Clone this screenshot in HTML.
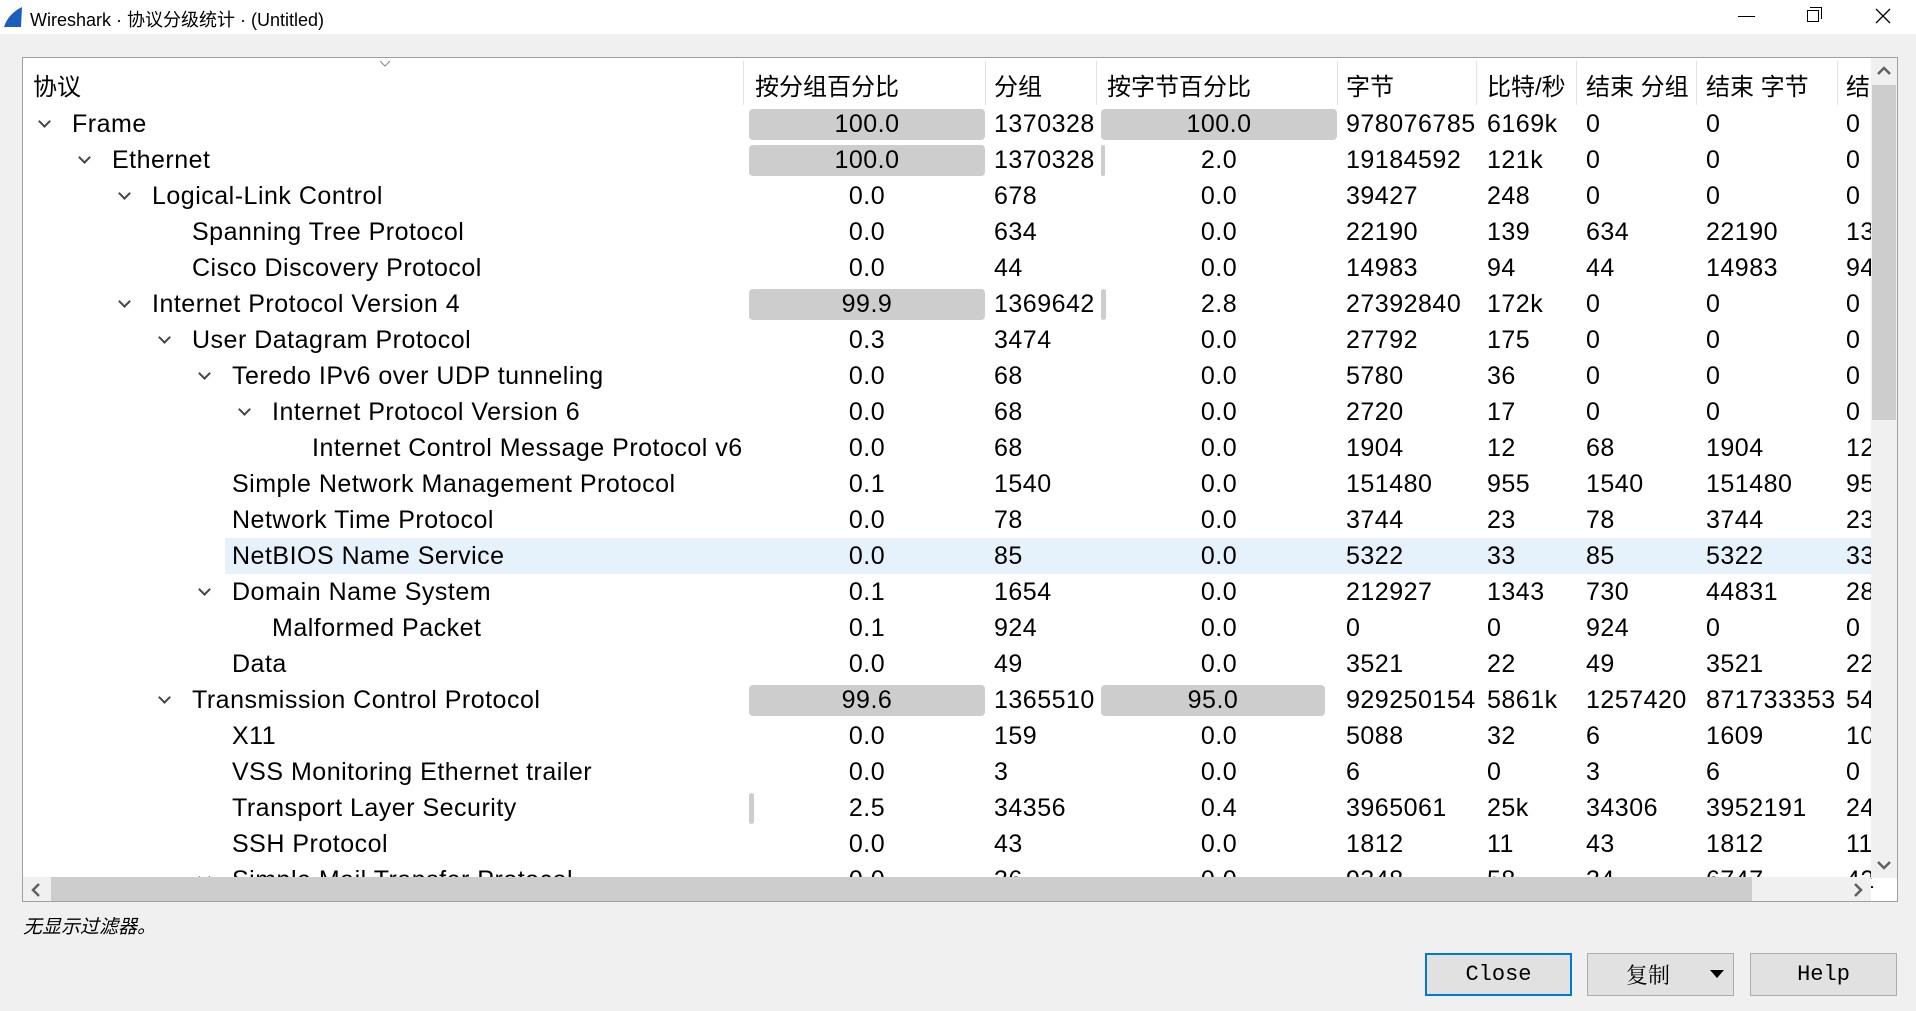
<!DOCTYPE html>
<html><head><meta charset="utf-8"><style>
*{margin:0;padding:0;box-sizing:border-box}
body{width:1916px;height:1011px;background:#f0f0f0;position:relative;overflow:hidden;font-family:"Liberation Sans","Noto Sans CJK SC",sans-serif;color:#000}
#title{position:absolute;left:0;top:0;width:1916px;height:34px;background:#fff}
#title .t{position:absolute;left:30px;top:6px;font-size:18px}
#tbl{position:absolute;left:22px;top:57px;width:1876px;height:845px;background:#fff;border:1px solid #a0a0a0;overflow:hidden}
.a{position:absolute;white-space:nowrap}
.h{font-size:24px;top:9px}
.dv{position:absolute;top:3px;width:1px;height:44px;background:#e3e3e3}
.r{position:absolute;left:0;width:1848px;height:36px;font-size:25px;line-height:36px;letter-spacing:0.5px;margin-top:1px}
.r .a{top:0}
.bar{position:absolute;top:3px;height:31px;background:#cdcdcd;border-radius:4px}
.pc{position:absolute;top:0;text-align:center;width:236px}
.arr{position:absolute;top:0;width:14px;height:36px}
.arr:before{content:"";position:absolute;left:2px;top:11px;width:7px;height:7px;border-right:2px solid #444;border-bottom:2px solid #444;transform:rotate(45deg)}
.btn{position:absolute;top:953px;height:43px;width:147px;background:#e1e1e1;border:1px solid #adadad;font-family:"Liberation Mono","Noto Serif CJK SC",monospace;font-size:22px;text-align:center;line-height:41px}
</style></head><body>
<div id="title">
<svg style="position:absolute;left:2px;top:6px" width="22" height="22"><path d="M2 21 Q6 8 20 1 L19 21 Z" fill="#1a5fbf"/></svg>
<div class="t">Wireshark · 协议分级统计 · (Untitled)</div>
<div class="a" style="left:1738px;top:16px;width:17px;height:1px;background:#000"></div>
<div class="a" style="left:1807px;top:10px;width:12px;height:12px;border:1px solid #000;background:#fff"></div>
<div class="a" style="left:1810px;top:7px;width:12px;height:12px;border-top:1px solid #000;border-right:1px solid #000"></div>
<svg style="position:absolute;left:1875px;top:8px" width="16" height="16"><path d="M1 1L15 15M15 1L1 15" stroke="#000" stroke-width="1.3"/></svg>
</div>
<div id="tbl">
<div class="a h" style="left:10px">协议</div>
<svg style="position:absolute;left:356px;top:2px" width="12" height="8"><path d="M1 1L6 6L11 1" stroke="#888" fill="none"/></svg>
<div class="dv" style="left:720px"></div><div class="dv" style="left:962px"></div><div class="dv" style="left:1073px"></div><div class="dv" style="left:1314px"></div><div class="dv" style="left:1453px"></div><div class="dv" style="left:1553px"></div><div class="dv" style="left:1673px"></div><div class="dv" style="left:1814px"></div>
<div class="a h" style="left:732px">按分组百分比</div>
<div class="a h" style="left:971px">分组</div>
<div class="a h" style="left:1084px">按字节百分比</div>
<div class="a h" style="left:1323px">字节</div>
<div class="a h" style="left:1464px">比特/秒</div>
<div class="a h" style="left:1563px">结束 分组</div>
<div class="a h" style="left:1683px">结束 字节</div>
<div class="a h" style="left:1823px">结</div>

<div class="r" style="top:47px"><span class="arr" style="left:15px"></span><span class="a" style="left:49px">Frame</span><span class="bar" style="left:726px;width:236px"></span><span class="pc" style="left:726px">100.0</span><span class="a" style="left:971px">1370328</span><span class="bar" style="left:1078px;width:236px"></span><span class="pc" style="left:1078px">100.0</span><span class="a" style="left:1323px">978076785</span><span class="a" style="left:1464px">6169k</span><span class="a" style="left:1563px">0</span><span class="a" style="left:1683px">0</span><span class="a" style="left:1823px">0</span></div>
<div class="r" style="top:83px"><span class="arr" style="left:55px"></span><span class="a" style="left:89px">Ethernet</span><span class="bar" style="left:726px;width:236px"></span><span class="pc" style="left:726px">100.0</span><span class="a" style="left:971px">1370328</span><span class="bar" style="left:1078px;width:4px"></span><span class="pc" style="left:1078px">2.0</span><span class="a" style="left:1323px">19184592</span><span class="a" style="left:1464px">121k</span><span class="a" style="left:1563px">0</span><span class="a" style="left:1683px">0</span><span class="a" style="left:1823px">0</span></div>
<div class="r" style="top:119px"><span class="arr" style="left:95px"></span><span class="a" style="left:129px">Logical-Link Control</span><span class="pc" style="left:726px">0.0</span><span class="a" style="left:971px">678</span><span class="pc" style="left:1078px">0.0</span><span class="a" style="left:1323px">39427</span><span class="a" style="left:1464px">248</span><span class="a" style="left:1563px">0</span><span class="a" style="left:1683px">0</span><span class="a" style="left:1823px">0</span></div>
<div class="r" style="top:155px"><span class="a" style="left:169px">Spanning Tree Protocol</span><span class="pc" style="left:726px">0.0</span><span class="a" style="left:971px">634</span><span class="pc" style="left:1078px">0.0</span><span class="a" style="left:1323px">22190</span><span class="a" style="left:1464px">139</span><span class="a" style="left:1563px">634</span><span class="a" style="left:1683px">22190</span><span class="a" style="left:1823px">13</span></div>
<div class="r" style="top:191px"><span class="a" style="left:169px">Cisco Discovery Protocol</span><span class="pc" style="left:726px">0.0</span><span class="a" style="left:971px">44</span><span class="pc" style="left:1078px">0.0</span><span class="a" style="left:1323px">14983</span><span class="a" style="left:1464px">94</span><span class="a" style="left:1563px">44</span><span class="a" style="left:1683px">14983</span><span class="a" style="left:1823px">94</span></div>
<div class="r" style="top:227px"><span class="arr" style="left:95px"></span><span class="a" style="left:129px">Internet Protocol Version 4</span><span class="bar" style="left:726px;width:236px"></span><span class="pc" style="left:726px">99.9</span><span class="a" style="left:971px">1369642</span><span class="bar" style="left:1078px;width:5px"></span><span class="pc" style="left:1078px">2.8</span><span class="a" style="left:1323px">27392840</span><span class="a" style="left:1464px">172k</span><span class="a" style="left:1563px">0</span><span class="a" style="left:1683px">0</span><span class="a" style="left:1823px">0</span></div>
<div class="r" style="top:263px"><span class="arr" style="left:135px"></span><span class="a" style="left:169px">User Datagram Protocol</span><span class="pc" style="left:726px">0.3</span><span class="a" style="left:971px">3474</span><span class="pc" style="left:1078px">0.0</span><span class="a" style="left:1323px">27792</span><span class="a" style="left:1464px">175</span><span class="a" style="left:1563px">0</span><span class="a" style="left:1683px">0</span><span class="a" style="left:1823px">0</span></div>
<div class="r" style="top:299px"><span class="arr" style="left:175px"></span><span class="a" style="left:209px">Teredo IPv6 over UDP tunneling</span><span class="pc" style="left:726px">0.0</span><span class="a" style="left:971px">68</span><span class="pc" style="left:1078px">0.0</span><span class="a" style="left:1323px">5780</span><span class="a" style="left:1464px">36</span><span class="a" style="left:1563px">0</span><span class="a" style="left:1683px">0</span><span class="a" style="left:1823px">0</span></div>
<div class="r" style="top:335px"><span class="arr" style="left:215px"></span><span class="a" style="left:249px">Internet Protocol Version 6</span><span class="pc" style="left:726px">0.0</span><span class="a" style="left:971px">68</span><span class="pc" style="left:1078px">0.0</span><span class="a" style="left:1323px">2720</span><span class="a" style="left:1464px">17</span><span class="a" style="left:1563px">0</span><span class="a" style="left:1683px">0</span><span class="a" style="left:1823px">0</span></div>
<div class="r" style="top:371px"><span class="a" style="left:289px">Internet Control Message Protocol v6</span><span class="pc" style="left:726px">0.0</span><span class="a" style="left:971px">68</span><span class="pc" style="left:1078px">0.0</span><span class="a" style="left:1323px">1904</span><span class="a" style="left:1464px">12</span><span class="a" style="left:1563px">68</span><span class="a" style="left:1683px">1904</span><span class="a" style="left:1823px">12</span></div>
<div class="r" style="top:407px"><span class="a" style="left:209px">Simple Network Management Protocol</span><span class="pc" style="left:726px">0.1</span><span class="a" style="left:971px">1540</span><span class="pc" style="left:1078px">0.0</span><span class="a" style="left:1323px">151480</span><span class="a" style="left:1464px">955</span><span class="a" style="left:1563px">1540</span><span class="a" style="left:1683px">151480</span><span class="a" style="left:1823px">95</span></div>
<div class="r" style="top:443px"><span class="a" style="left:209px">Network Time Protocol</span><span class="pc" style="left:726px">0.0</span><span class="a" style="left:971px">78</span><span class="pc" style="left:1078px">0.0</span><span class="a" style="left:1323px">3744</span><span class="a" style="left:1464px">23</span><span class="a" style="left:1563px">78</span><span class="a" style="left:1683px">3744</span><span class="a" style="left:1823px">23</span></div>
<div class="r" style="top:479px;background:#e5f1fb;left:202px;width:1646px"></div>
<div class="r" style="top:479px"><span class="a" style="left:209px">NetBIOS Name Service</span><span class="pc" style="left:726px">0.0</span><span class="a" style="left:971px">85</span><span class="pc" style="left:1078px">0.0</span><span class="a" style="left:1323px">5322</span><span class="a" style="left:1464px">33</span><span class="a" style="left:1563px">85</span><span class="a" style="left:1683px">5322</span><span class="a" style="left:1823px">33</span></div>
<div class="r" style="top:515px"><span class="arr" style="left:175px"></span><span class="a" style="left:209px">Domain Name System</span><span class="pc" style="left:726px">0.1</span><span class="a" style="left:971px">1654</span><span class="pc" style="left:1078px">0.0</span><span class="a" style="left:1323px">212927</span><span class="a" style="left:1464px">1343</span><span class="a" style="left:1563px">730</span><span class="a" style="left:1683px">44831</span><span class="a" style="left:1823px">28</span></div>
<div class="r" style="top:551px"><span class="a" style="left:249px">Malformed Packet</span><span class="pc" style="left:726px">0.1</span><span class="a" style="left:971px">924</span><span class="pc" style="left:1078px">0.0</span><span class="a" style="left:1323px">0</span><span class="a" style="left:1464px">0</span><span class="a" style="left:1563px">924</span><span class="a" style="left:1683px">0</span><span class="a" style="left:1823px">0</span></div>
<div class="r" style="top:587px"><span class="a" style="left:209px">Data</span><span class="pc" style="left:726px">0.0</span><span class="a" style="left:971px">49</span><span class="pc" style="left:1078px">0.0</span><span class="a" style="left:1323px">3521</span><span class="a" style="left:1464px">22</span><span class="a" style="left:1563px">49</span><span class="a" style="left:1683px">3521</span><span class="a" style="left:1823px">22</span></div>
<div class="r" style="top:623px"><span class="arr" style="left:135px"></span><span class="a" style="left:169px">Transmission Control Protocol</span><span class="bar" style="left:726px;width:236px"></span><span class="pc" style="left:726px">99.6</span><span class="a" style="left:971px">1365510</span><span class="bar" style="left:1078px;width:224px"></span><span class="pc" style="left:1078px;width:224px">95.0</span><span class="a" style="left:1323px">929250154</span><span class="a" style="left:1464px">5861k</span><span class="a" style="left:1563px">1257420</span><span class="a" style="left:1683px">871733353</span><span class="a" style="left:1823px">54</span></div>
<div class="r" style="top:659px"><span class="a" style="left:209px">X11</span><span class="pc" style="left:726px">0.0</span><span class="a" style="left:971px">159</span><span class="pc" style="left:1078px">0.0</span><span class="a" style="left:1323px">5088</span><span class="a" style="left:1464px">32</span><span class="a" style="left:1563px">6</span><span class="a" style="left:1683px">1609</span><span class="a" style="left:1823px">10</span></div>
<div class="r" style="top:695px"><span class="a" style="left:209px">VSS Monitoring Ethernet trailer</span><span class="pc" style="left:726px">0.0</span><span class="a" style="left:971px">3</span><span class="pc" style="left:1078px">0.0</span><span class="a" style="left:1323px">6</span><span class="a" style="left:1464px">0</span><span class="a" style="left:1563px">3</span><span class="a" style="left:1683px">6</span><span class="a" style="left:1823px">0</span></div>
<div class="r" style="top:731px"><span class="a" style="left:209px">Transport Layer Security</span><span class="bar" style="left:726px;width:5px"></span><span class="pc" style="left:726px">2.5</span><span class="a" style="left:971px">34356</span><span class="pc" style="left:1078px">0.4</span><span class="a" style="left:1323px">3965061</span><span class="a" style="left:1464px">25k</span><span class="a" style="left:1563px">34306</span><span class="a" style="left:1683px">3952191</span><span class="a" style="left:1823px">24</span></div>
<div class="r" style="top:767px"><span class="a" style="left:209px">SSH Protocol</span><span class="pc" style="left:726px">0.0</span><span class="a" style="left:971px">43</span><span class="pc" style="left:1078px">0.0</span><span class="a" style="left:1323px">1812</span><span class="a" style="left:1464px">11</span><span class="a" style="left:1563px">43</span><span class="a" style="left:1683px">1812</span><span class="a" style="left:1823px">11</span></div>
<div class="r" style="top:803px"><span class="arr" style="left:175px"></span><span class="a" style="left:209px">Simple Mail Transfer Protocol</span><span class="pc" style="left:726px">0.0</span><span class="a" style="left:971px">36</span><span class="pc" style="left:1078px">0.0</span><span class="a" style="left:1323px">9348</span><span class="a" style="left:1464px">58</span><span class="a" style="left:1563px">34</span><span class="a" style="left:1683px">6747</span><span class="a" style="left:1823px">42</span></div>

<div class="a" style="left:1848px;top:0;width:26px;height:820px;background:#f0f0f0"></div>
<div class="a" style="left:1849px;top:27px;width:24px;height:335px;background:#cdcdcd"></div>
<svg style="position:absolute;left:1854px;top:8px" width="14" height="10"><path d="M1 8L7 2L13 8" stroke="#606060" stroke-width="2.5" fill="none"/></svg>
<svg style="position:absolute;left:1854px;top:802px" width="14" height="10"><path d="M1 2L7 8L13 2" stroke="#606060" stroke-width="2.5" fill="none"/></svg>
<div class="a" style="left:0;top:819px;width:1848px;height:25px;background:#f0f0f0"></div>
<div class="a" style="left:28px;top:819px;width:1701px;height:24px;background:#cdcdcd"></div>
<svg style="position:absolute;left:8px;top:825px" width="10" height="14"><path d="M8 1L2 7L8 13" stroke="#606060" stroke-width="2.5" fill="none"/></svg>
<svg style="position:absolute;left:1830px;top:825px" width="10" height="14"><path d="M2 1L8 7L2 13" stroke="#606060" stroke-width="2.5" fill="none"/></svg>
</div>
<div class="a" style="left:23px;top:912px;font-size:19px;font-style:italic">无显示过滤器。</div>
<div class="btn" style="left:1425px;border:2px solid #0078d7;line-height:39px">Close</div>
<div class="btn" style="left:1587px;text-align:left;padding-left:38px;font-family:'Noto Serif CJK SC',serif">复制<svg style="position:absolute;left:122px;top:16px" width="14" height="9"><path d="M0 0H14L7 8Z" fill="#000"/></svg></div>
<div class="btn" style="left:1750px">Help</div>
</body></html>
